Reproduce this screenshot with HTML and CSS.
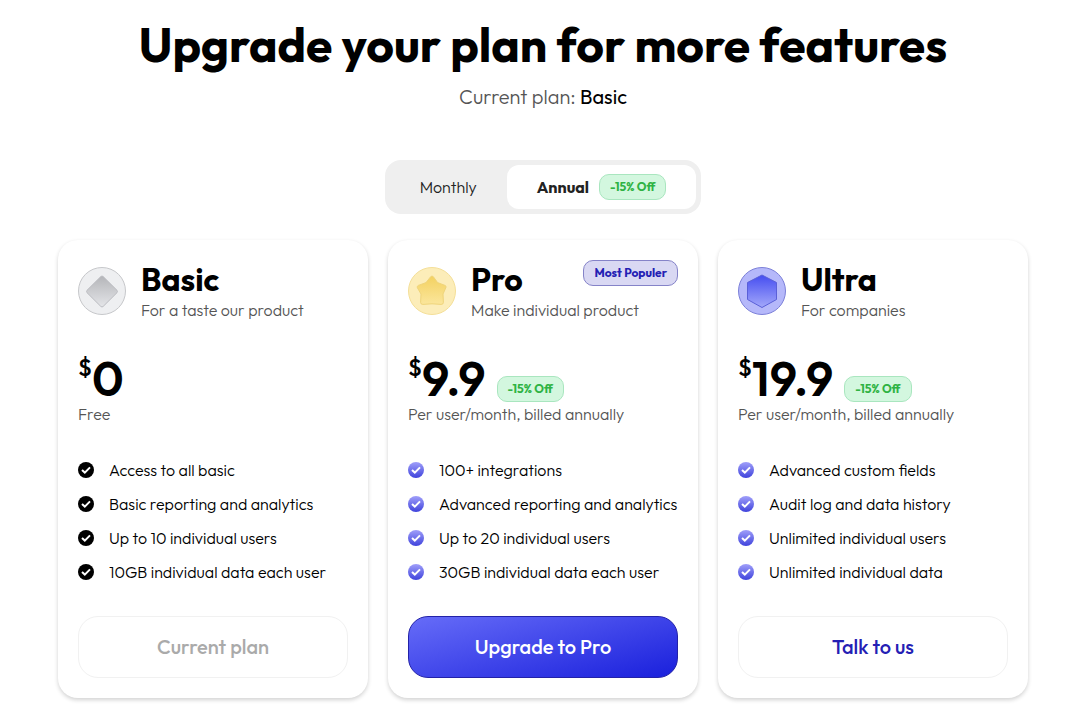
FILE: index.html
```html
<!DOCTYPE html>
<html lang="en">
<head>
    <meta charset="UTF-8">
    <meta name="viewport" content="width=device-width, initial-scale=1.0">
    <title>Upgrade your plan</title>
    <link rel="stylesheet" href="styles.css">
</head>
<body>
    <!-- shared icon shapes and gradients -->
    <svg class="defs" width="0" height="0" aria-hidden="true">
        <defs>
            <linearGradient id="silver" x1="0" y1="0" x2="0" y2="1">
                <stop offset="0" stop-color="#b4b5b9"/>
                <stop offset="1" stop-color="#e4e5e8"/>
            </linearGradient>
            <linearGradient id="gold" x1="0" y1="0" x2="0" y2="1">
                <stop offset="0" stop-color="#f3d160"/>
                <stop offset="1" stop-color="#fbe69c"/>
            </linearGradient>
            <linearGradient id="blue" x1="0" y1="0" x2="0" y2="1">
                <stop offset="0" stop-color="#454df0"/>
                <stop offset="1" stop-color="#a3a8fa"/>
            </linearGradient>
            <linearGradient id="blueCheck" x1="0" y1="0" x2="0" y2="1">
                <stop offset="0" stop-color="#a09ffa"/>
                <stop offset="1" stop-color="#3f43dc"/>
            </linearGradient>
            <symbol id="check" viewBox="0 0 16 16">
                <circle cx="8" cy="8" r="8"/>
                <path d="M4 8 L6.8 10.6 L12 5.4" fill="none" stroke="#fff" stroke-width="2"/>
            </symbol>
        </defs>
    </svg>

    <main>
        <h1>Upgrade your plan for more features</h1>
        <p class="current">Current plan: <span>Basic</span></p>

        <div class="toggle">
            <button type="button">Monthly</button>
            <button type="button" class="active">Annual <span class="tag">-15% Off</span></button>
        </div>

        <div class="plans">
            <section class="card basic">
                <div class="card-header">
                    <svg class="plan-icon" viewBox="0 0 48 48">
                        <circle cx="24" cy="24" r="23.5" fill="#eeeff1" stroke="#c6c7ca"/>
                        <path d="M22.8 9.6 Q24 8.4 25.2 9.6 L39 23.3 Q40 24.5 39 25.7 L25.2 39.4 Q24 40.6 22.8 39.4 L9 25.7 Q8 24.5 9 23.3 Z" fill="url(#silver)" stroke="#bcbdc2"/>
                    </svg>
                    <div>
                        <h2>Basic</h2>
                        <p>For a taste our product</p>
                    </div>
                </div>
                <div class="price"><sup>$</sup><strong>0</strong></div>
                <p class="billing">Free</p>
                <ul>
                    <li><svg><use href="#check"/></svg>Access to all basic</li>
                    <li><svg><use href="#check"/></svg>Basic reporting and analytics</li>
                    <li><svg><use href="#check"/></svg>Up to 10 individual users</li>
                    <li><svg><use href="#check"/></svg>10GB individual data each user</li>
                </ul>
                <button type="button" class="btn" disabled>Current plan</button>
            </section>

            <section class="card pro">
                <span class="popular">Most Populer</span>
                <div class="card-header">
                    <svg class="plan-icon" viewBox="0 0 48 48">
                        <circle cx="24" cy="24" r="23.5" fill="#fcedb9" stroke="#f4df98"/>
                        <path d="M22.6 9.8 Q24 8.2 25.4 9.8 L29.6 15.6 L37 18.4 Q38.8 19.2 37.8 20.8 L35 27 L35.4 35.4 Q35.2 37.6 33.2 37.4 L24 36.8 L14.8 37.4 Q12.8 37.6 12.6 35.4 L13 27 L9.4 20.8 Q8.6 19.2 10.4 18.4 L18 15.6 Z" fill="url(#gold)" stroke="#efd47a"/>
                    </svg>
                    <div>
                        <h2>Pro</h2>
                        <p>Make individual product</p>
                    </div>
                </div>
                <div class="price"><sup>$</sup><strong>9.9</strong><span class="tag">-15% Off</span></div>
                <p class="billing">Per user/month, billed annually</p>
                <ul>
                    <li><svg><use href="#check"/></svg>100+ integrations</li>
                    <li><svg><use href="#check"/></svg>Advanced reporting and analytics</li>
                    <li><svg><use href="#check"/></svg>Up to 20 individual users</li>
                    <li><svg><use href="#check"/></svg>30GB individual data each user</li>
                </ul>
                <button type="button" class="btn primary">Upgrade to Pro</button>
            </section>

            <section class="card ultra">
                <div class="card-header">
                    <svg class="plan-icon" viewBox="0 0 48 48">
                        <circle cx="24" cy="24" r="23.5" fill="#b5b8fa" stroke="#7b7fd8"/>
                        <path d="M24 8 L38.5 15.5 V32.5 L24 40.5 L9.5 32.5 V15.5 Z" fill="url(#blue)" stroke="#5a60d8"/>
                    </svg>
                    <div>
                        <h2>Ultra</h2>
                        <p>For companies</p>
                    </div>
                </div>
                <div class="price"><sup>$</sup><strong>19.9</strong><span class="tag">-15% Off</span></div>
                <p class="billing">Per user/month, billed annually</p>
                <ul>
                    <li><svg><use href="#check"/></svg>Advanced custom fields</li>
                    <li><svg><use href="#check"/></svg>Audit log and data history</li>
                    <li><svg><use href="#check"/></svg>Unlimited individual users</li>
                    <li><svg><use href="#check"/></svg>Unlimited individual data</li>
                </ul>
                <button type="button" class="btn">Talk to us</button>
            </section>
        </div>
    </main>
</body>
</html>
```
FILE: styles.css
```css
* { margin: 0; padding: 0; box-sizing: border-box; }
body {
    font-family: Outfit, Lato, sans-serif;
    font-size: 16px;
    font-weight: 300;
    color: #000;
    background: #fff;
}
button { font-family: inherit; font-weight: inherit; cursor: pointer; }
.defs { position: absolute; }
main {
    display: flex;
    flex-direction: column;
    align-items: center;
    padding: 16px 52px 20px 58px;
}
h1 { font-size: 48px; line-height: 56px; font-weight: 700; text-align: center; }
.current { margin-top: 13px; font-size: 20px; line-height: 24px; color: #555; }
.current span { color: #000; font-weight: 400; }

.toggle {
    display: flex;
    margin-top: 51px;
    padding: 5px;
    border-radius: 16px;
    background: #efefef;
}
.toggle button {
    display: flex;
    align-items: center;
    gap: 10px;
    height: 44px;
    padding: 0 30px;
    border: none;
    border-radius: 12px;
    background: none;
    font-size: 16px;
    color: #222;
}
.toggle .active { background: #fff; font-weight: 700; }
.tag {
    height: 26px;
    padding: 0 10px;
    border: 1px solid #a9e6bf;
    border-radius: 10px;
    background: #d3f7df;
    color: #2fb344;
    font-size: 12px;
    line-height: 24px;
    font-weight: 700;
}

.plans {
    display: grid;
    grid-template-columns: repeat(3, 1fr);
    gap: 20px;
    width: 100%;
    max-width: 970px;
    margin-top: 26px;
}
.card {
    position: relative;
    padding: 20px;
    border-radius: 20px;
    background: #fff;
    box-shadow: 0 2px 4px rgba(0, 0, 0, 0.18);
}
.card-header { display: flex; align-items: center; gap: 15px; }
.plan-icon { width: 48px; height: 48px; flex-shrink: 0; }
h2 { margin-bottom: 2px; font-size: 32px; line-height: 38px; font-weight: 700; }
.card-header p, .billing { line-height: 20px; color: #555; }
.card-header p { margin-bottom: 2px; }
.popular {
    position: absolute;
    top: 20px;
    right: 20px;
    height: 26px;
    padding: 0 10px;
    border: 1px solid #8583c8;
    border-radius: 10px;
    background: #d9d8f3;
    color: #2420b4;
    font-size: 12px;
    line-height: 24px;
    font-weight: 700;
}
.price { display: flex; align-items: flex-end; height: 52px; margin-top: 30px; }
.price sup { align-self: flex-start; font-size: 24px; line-height: 30px; font-weight: 500; }
.price strong { font-size: 48px; line-height: 52px; font-weight: 600; }
.price .tag { margin: 0 0 2px 11px; }

ul { display: grid; gap: 10px; margin: 34px 0 32px; list-style: none; }
li { display: flex; align-items: center; gap: 15px; line-height: 24px; white-space: nowrap; }
li svg { width: 16px; height: 16px; fill: url(#blueCheck); }
.basic li svg { fill: #000; }

.btn {
    width: 100%;
    height: 62px;
    padding-bottom: 2px;
    border: 1px solid #f1f1f1;
    border-radius: 20px;
    background: #fff;
    color: #2420b4;
    font-size: 20px;
    font-weight: 500;
}
.btn:disabled { color: #aaa; cursor: default; }
.primary {
    border-color: #2322a8;
    background: linear-gradient(165deg, #666cf8, #1a20dc);
    color: #fff;
}
```
